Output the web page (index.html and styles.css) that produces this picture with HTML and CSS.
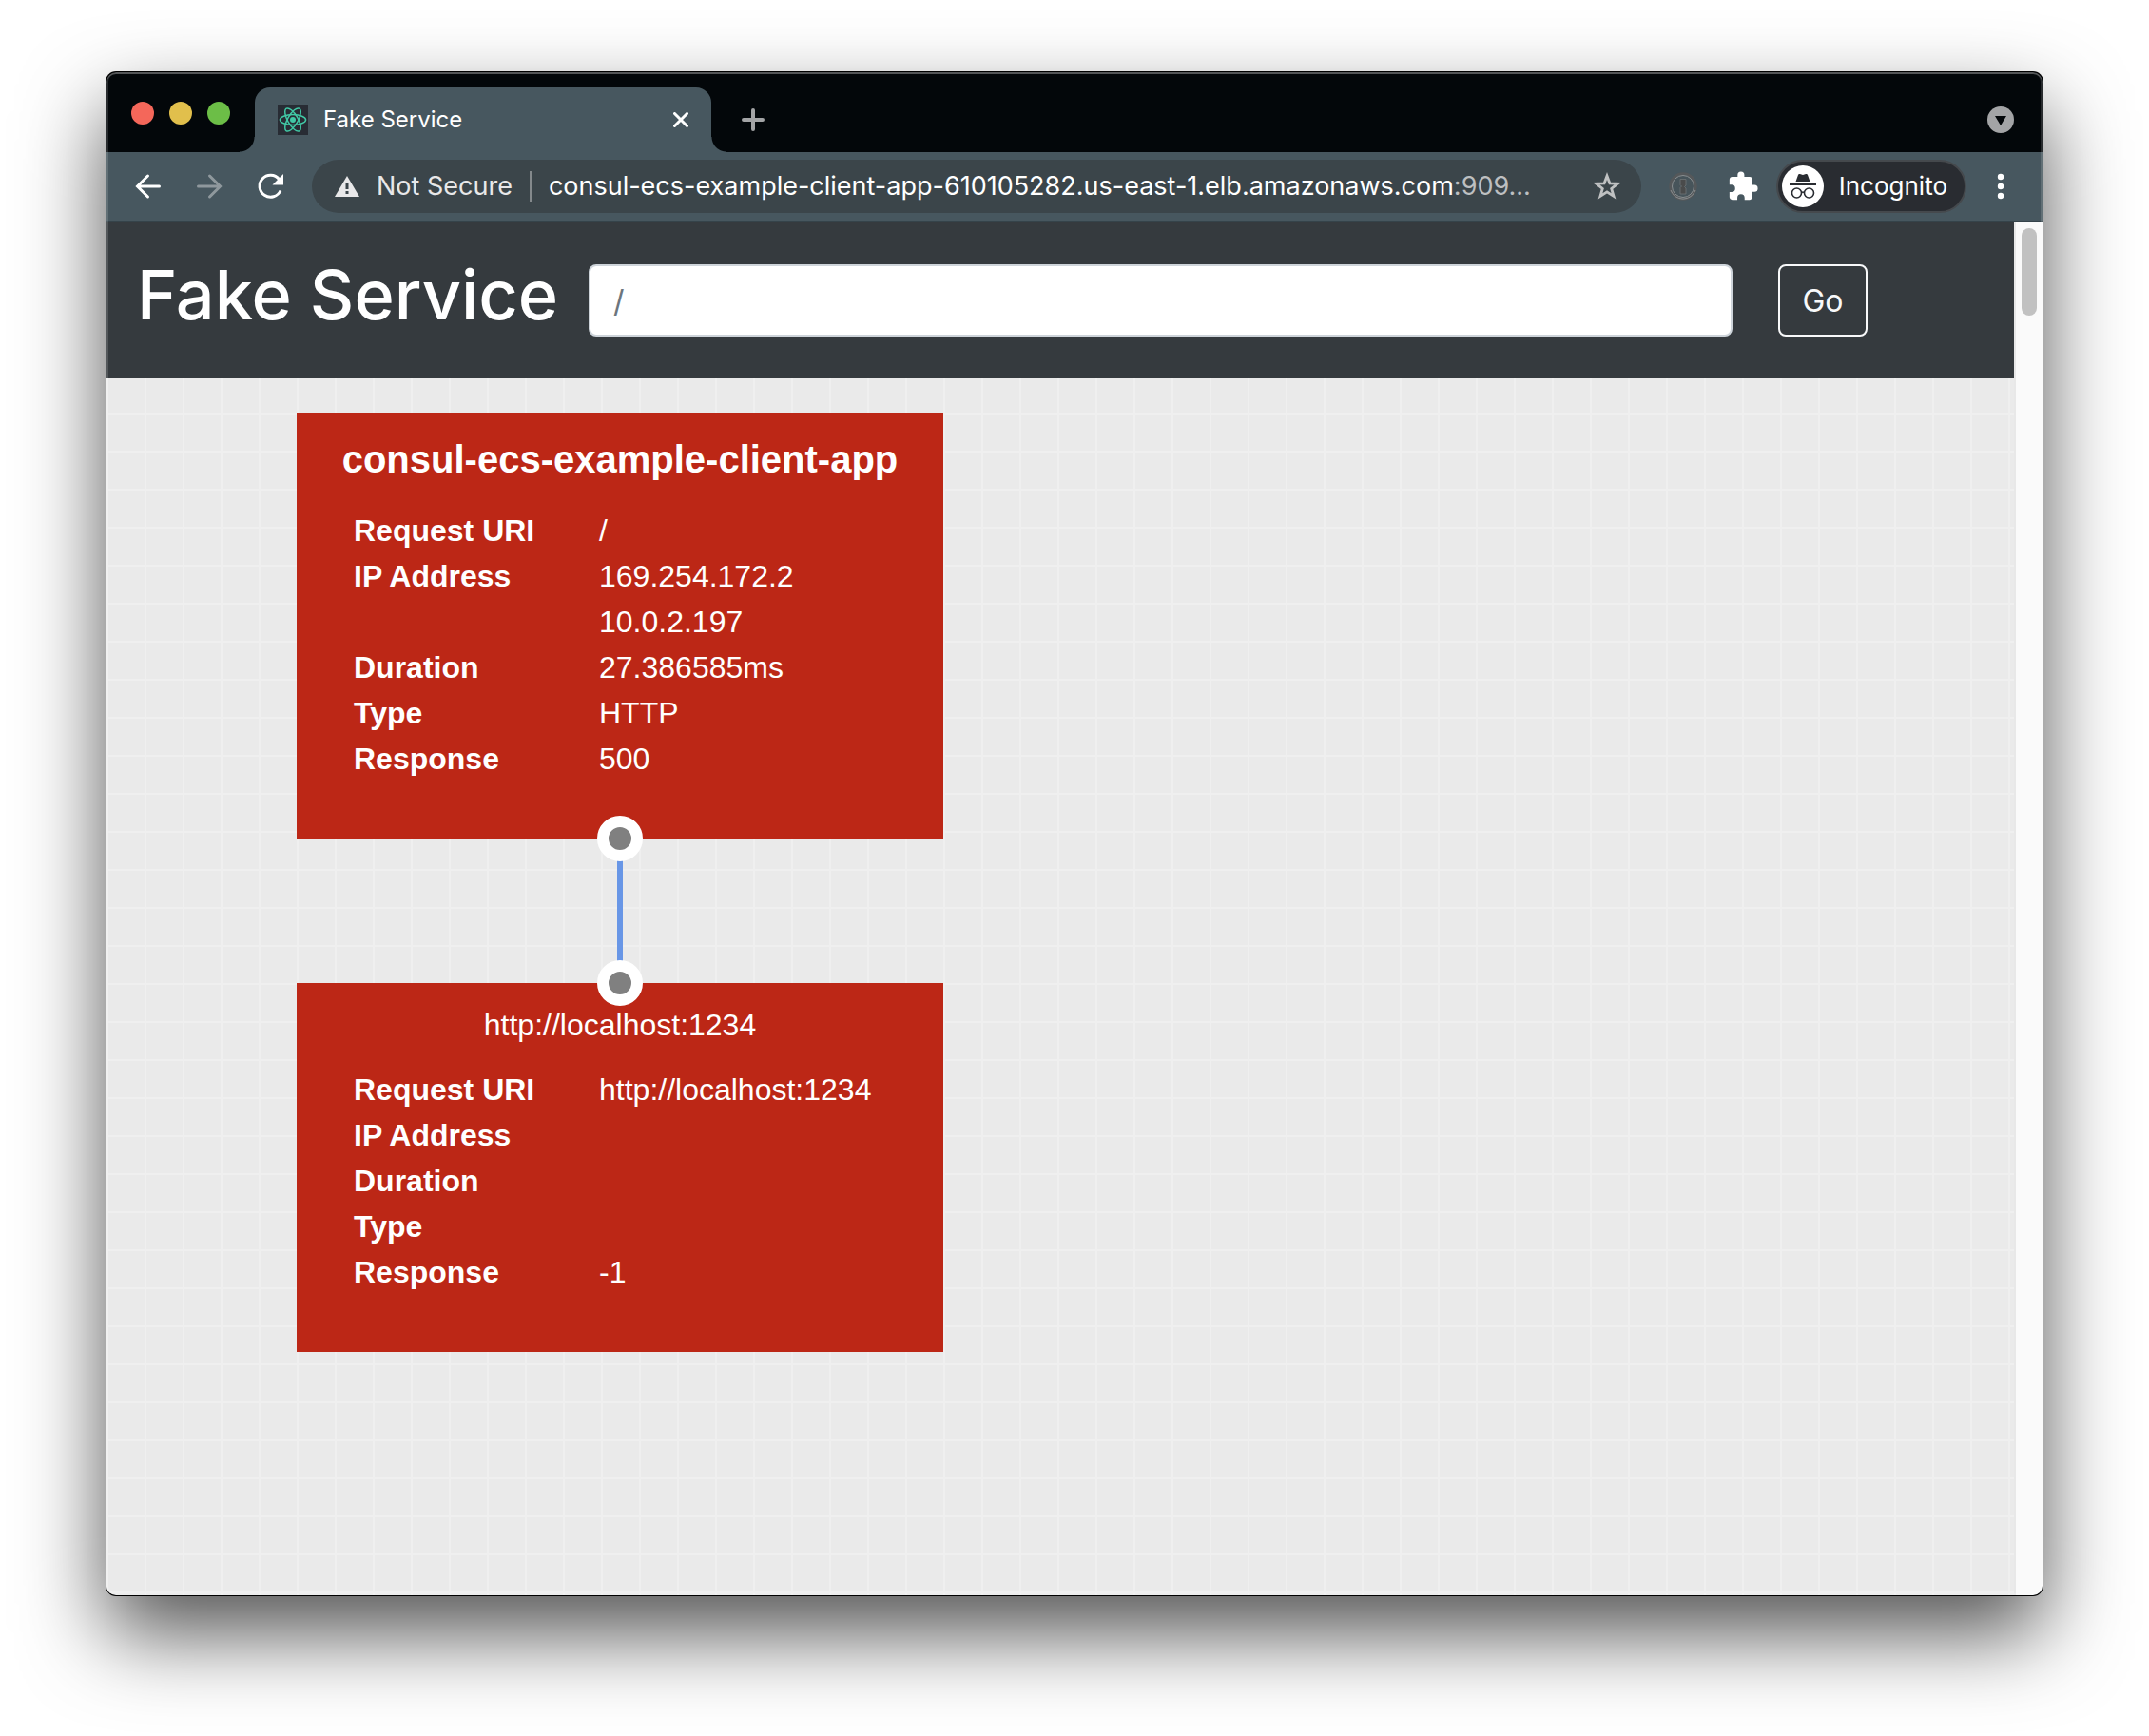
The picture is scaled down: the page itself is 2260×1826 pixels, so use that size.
FILE: index.html
```html
<!DOCTYPE html>
<html lang="en">
<head>
<meta charset="utf-8">
<title>Fake Service</title>
<link rel="stylesheet" href="styles.css">
</head>
<body>
<div class="window">
  <div class="tabstrip">
    <div class="lights">
      <span class="light light-close"></span>
      <span class="light light-min"></span>
      <span class="light light-max"></span>
    </div>
    <div class="tab">
      <svg class="favicon" viewBox="0 0 32 32" aria-hidden="true">
        <rect width="32" height="32" fill="#282c34"/>
        <circle cx="16" cy="16" r="3" fill="#41c8a5"/>
        <g fill="none" stroke="#41c8a5" stroke-width="1.5">
          <ellipse cx="16" cy="16" rx="13.600" ry="5.400"/>
          <ellipse cx="16" cy="16" rx="13.600" ry="5.400" transform="rotate(60 16 16)"/>
          <ellipse cx="16" cy="16" rx="13.600" ry="5.400" transform="rotate(120 16 16)"/>
        </g>
      </svg>
      <span class="tab-title">Fake Service</span>
      <button class="icon-btn" type="button" aria-label="Close tab">
        <svg width="16" height="16" viewBox="0 0 16 16"><path d="M1.5 1.5l13 13M14.5 1.5l-13 13" stroke="#fff" stroke-width="3" stroke-linecap="round"/></svg>
      </button>
    </div>
    <button class="icon-btn new-tab" type="button" aria-label="New tab">
      <svg width="24" height="24" viewBox="0 0 24 24"><path d="M12 2v20M2 12h20" stroke="#a3a4a6" stroke-width="4" stroke-linecap="round"/></svg>
    </button>
    <button class="icon-btn tab-search" type="button" aria-label="Search tabs">
      <svg width="28" height="28" viewBox="0 0 28 28"><circle cx="14" cy="14" r="14" fill="#a3a4a6"/><path d="M8 10h12l-6 10z" fill="#03070a"/></svg>
    </button>
  </div>

  <div class="toolbar">
    <div class="nav">
      <button class="icon-btn" type="button" aria-label="Back">
        <svg width="32" height="32" viewBox="0 0 32 32" fill="none" stroke="#fff" stroke-width="3" stroke-linecap="round"><path d="M27.500 16H5M15.500 5L4.500 16l11 11"/></svg>
      </button>
      <button class="icon-btn" type="button" aria-label="Forward">
        <svg width="32" height="32" viewBox="0 0 32 32" fill="none" stroke="#8f989d" stroke-width="3" stroke-linecap="round"><path d="M4.500 16H27M16.500 5l11 11-11 11"/></svg>
      </button>
      <button class="icon-btn" type="button" aria-label="Reload">
        <svg width="32" height="32" viewBox="0 0 32 32"><path d="M27 20.500a11.500 11.500 0 1 1-1.500-12" fill="none" stroke="#fff" stroke-width="3"/><path d="M30 3v11.500H18.500z" fill="#fff"/></svg>
      </button>
    </div>
    <div class="omnibox">
      <svg width="26" height="24" viewBox="0 0 26 24"><path d="M13 1L26 23H0z" fill="#e8e8e9"/><path d="M11.500 9h3v6h-3zM11.500 17h3v3h-3z" fill="#3b454a"/></svg>
      <span class="security">Not Secure</span>
      <span class="divider"></span>
      <span class="url">consul-ecs-example-client-app-610105282.us-east-1.elb.amazonaws.com<span class="port">:909...</span></span>
      <button class="icon-btn" type="button" aria-label="Bookmark this page">
        <svg width="32" height="32" viewBox="0 0 32 32"><path d="M16 5l2.900 7.800 8.400.4-6.600 5.200 2.300 8L16 21.900l-7 4.500 2.300-8-6.600-5.200 8.400-.4z" fill="none" stroke="#bfc1c2" stroke-width="2.800"/></svg>
      </button>
    </div>
    <div class="actions">
      <button class="icon-btn" type="button" aria-label="Password manager">
        <svg width="32" height="32" viewBox="0 0 32 32"><circle cx="16" cy="16" r="13.200" fill="#47545a" stroke="#55585a" stroke-width="3"/><circle cx="16" cy="16" r="11.500" fill="none" stroke="#8b8f91" stroke-width="1"/><path d="M3 20a13.800 13.800 0 0 0 26 0" fill="none" stroke="#8b8f91" stroke-width="1"/><path d="M13 8.500h6V15l-1.500 1.500L19 18v6h-6v-6.500l1.500-1.500L13 14.500z" fill="#4a4b4b" stroke="#6f7476" stroke-width=".8"/></svg>
      </button>
      <button class="icon-btn" type="button" aria-label="Extensions">
        <svg width="34" height="34" viewBox="0 0 24 24"><path d="M20.500 11H19V7c0-1.100-.9-2-2-2h-4V3.500a2.500 2.500 0 0 0-5 0V5H4c-1.100 0-2 .9-2 2v3.800h1.500a2.700 2.700 0 0 1 0 5.400H2V20c0 1.100.9 2 2 2h3.800v-1.500a2.700 2.700 0 0 1 5.400 0V22H17c1.100 0 2-.9 2-2v-4h1.500a2.500 2.500 0 0 0 0-5z" fill="#fff"/></svg>
      </button>
      <button class="incognito" type="button">
        <svg width="44" height="44" viewBox="0 0 44 44" aria-hidden="true"><circle cx="22" cy="22" r="22" fill="#fff"/><path d="M14.500 17l2.500-7c.3-.9 1-1.200 1.900-.9l3.100 1 3.100-1c.9-.3 1.600 0 1.900.9l2.500 7z" fill="#292c31"/><path d="M8 20h28" stroke="#292c31" stroke-width="2"/><g fill="none" stroke="#292c31" stroke-width="1.600"><circle cx="15.500" cy="29" r="5"/><circle cx="28.500" cy="29" r="5"/><path d="M20.500 28.500q1.500-1 3 0"/></g></svg>
        <span>Incognito</span>
      </button>
      <button class="icon-btn" type="button" aria-label="Menu">
        <svg width="8" height="28" viewBox="0 0 8 28" fill="#fff"><circle cx="4" cy="4" r="3.200"/><circle cx="4" cy="14" r="3.200"/><circle cx="4" cy="24" r="3.200"/></svg>
      </button>
    </div>
  </div>

  <div class="viewport">
    <div class="page">
      <header class="header">
        <h1 class="brand">Fake Service</h1>
        <form class="request-form">
          <input class="path" type="text" placeholder="/" aria-label="Request path">
          <button class="go" type="button">Go</button>
        </form>
      </header>
      <main class="canvas">
        <section class="node">
          <h2 class="node-title">consul-ecs-example-client-app</h2>
          <table class="facts">
            <tr><th scope="row">Request URI</th><td>/</td></tr>
            <tr><th scope="row">IP Address</th><td>169.254.172.2<br>10.0.2.197</td></tr>
            <tr><th scope="row">Duration</th><td>27.386585ms</td></tr>
            <tr><th scope="row">Type</th><td>HTTP</td></tr>
            <tr><th scope="row">Response</th><td>500</td></tr>
          </table>
          <span class="port-dot port-out"></span>
        </section>
        <div class="edge"></div>
        <section class="node">
          <p class="node-url">http://localhost:1234</p>
          <table class="facts">
            <tr><th scope="row">Request URI</th><td>http://localhost:1234</td></tr>
            <tr><th scope="row">IP Address</th><td></td></tr>
            <tr><th scope="row">Duration</th><td></td></tr>
            <tr><th scope="row">Type</th><td></td></tr>
            <tr><th scope="row">Response</th><td>-1</td></tr>
          </table>
          <span class="port-dot port-in"></span>
        </section>
      </main>
    </div>
    <div class="scrollbar"><div class="thumb"></div></div>
  </div>
</div>
</body>
</html>
```

FILE: styles.css
```css
* {
  box-sizing: border-box;
}

body {
  margin: 0;
  min-height: 100vh;
  padding: 76px 112px 148px;
  display: flex;
  background: #fff;
  font-family: Inter, "Liberation Sans", sans-serif;
}

button {
  font: inherit;
  cursor: pointer;
}

.window {
  flex: 1;
  min-width: 0;
  position: relative;
  display: flex;
  flex-direction: column;
  overflow: hidden;
  border-radius: 10px;
  background: #03070a;
  box-shadow: 0 0 0 1px #000, 0 40px 88px rgba(0, 0, 0, .68);
}

/* Light rim drawn over the window's contents */
.window::after {
  content: "";
  position: absolute;
  inset: 0;
  border-radius: inherit;
  pointer-events: none;
  box-shadow: inset 0 2px 0 rgba(255, 255, 255, .2), inset 0 0 0 2px rgba(255, 255, 255, .15);
}

.icon-btn {
  display: flex;
  padding: 0;
  border: 0;
  background: none;
}

/* Tab strip */
.tabstrip {
  display: flex;
  align-items: flex-end;
  height: 84px;
  padding-right: 30px;
}

.lights {
  display: flex;
  gap: 16px;
  padding: 0 26px 29px;
}

.light {
  width: 24px;
  height: 24px;
  border-radius: 50%;
}

.light-close { background: #f4675a; }
.light-min { background: #e1bf4c; }
.light-max { background: #6cbe47; }

.tab {
  position: relative;
  display: flex;
  align-items: center;
  width: 480px;
  height: 68px;
  padding: 0 24px;
  border-radius: 16px 16px 0 0;
  background: #47575f;
  color: #fff;
}

/* Outward curves at the foot of the active tab */
.tab::before,
.tab::after {
  content: "";
  position: absolute;
  bottom: 0;
  width: 16px;
  height: 16px;
}

.tab::before {
  right: 100%;
  background: radial-gradient(circle at 0 0, transparent 15px, #47575f 16px);
}

.tab::after {
  left: 100%;
  background: radial-gradient(circle at 100% 0, transparent 15px, #47575f 16px);
}

.favicon {
  width: 32px;
  height: 32px;
}

.tab-title {
  flex: 1;
  padding-left: 16px;
  font-size: 24px;
  line-height: 32px;
}

.new-tab {
  margin: 0 auto 22px 32px;
}

.tab-search {
  margin-bottom: 20px;
}

/* Toolbar */
.toolbar {
  display: flex;
  align-items: center;
  height: 74px;
  padding: 0 40px 0 28px;
  border-bottom: 2px solid #35434a;
  background: #47575f;
  color: #fff;
  font-size: 27px;
  line-height: 32px;
}

.nav {
  display: flex;
  gap: 32px;
}

.omnibox {
  flex: 1;
  min-width: 0;
  display: flex;
  align-items: center;
  height: 56px;
  margin-left: 28px;
  padding: 0 20px 0 24px;
  border-radius: 28px;
  background: #3b454a;
}

.security {
  padding-left: 18px;
  color: #e8e8e9;
  white-space: nowrap;
}

.divider {
  width: 2px;
  height: 32px;
  margin: 0 18px;
  background: #84898c;
}

.url {
  flex: 1;
  min-width: 0;
  overflow: hidden;
  white-space: nowrap;
}

.port {
  color: #bdbfc1;
}

.actions {
  display: flex;
  align-items: center;
  gap: 30px;
  padding-left: 28px;
}

.incognito {
  display: flex;
  align-items: center;
  gap: 16px;
  height: 56px;
  margin: 0 2px 0 -12px;
  padding: 0 18px 0 4px;
  border: 2px solid #45494d;
  border-radius: 28px;
  background: #292c31;
  color: #fff;
  font-size: 26px;
}

/* Page */
.viewport {
  flex: 1;
  display: flex;
}

.page {
  flex: 1;
  min-width: 0;
  display: flex;
  flex-direction: column;
}

.header {
  display: flex;
  align-items: center;
  gap: 32px;
  height: 164px;
  padding: 0 154px 0 32px;
  background: #353a3e;
  color: #fff;
}

.brand {
  margin: 0;
  padding-bottom: 12px;
  font-size: 72px;
  line-height: 96px;
  font-weight: 500;
  white-space: nowrap;
}

.request-form {
  flex: 1;
  display: flex;
  gap: 48px;
}

.path {
  flex: 1;
  min-width: 0;
  height: 76px;
  padding: 0 24px;
  border: 2px solid #ced4da;
  border-radius: 8px;
  background: #fff;
  font: 32px/48px Inter, sans-serif;
}

.path::placeholder {
  color: #6c757d;
}

.go {
  height: 76px;
  width: 94px;
  padding: 0;
  border: 2px solid #f8f9fa;
  border-radius: 8px;
  background: none;
  color: #f8f9fa;
  font-size: 32px;
}

.canvas {
  flex: 1;
  padding: 36px 200px;
  background-color: #eaeaea;
  background-image:
    linear-gradient(#efefef 2px, transparent 2px),
    linear-gradient(90deg, #efefef 2px, transparent 2px);
  background-size: 40px 40px;
  background-position: 0 -4px;
  color: #fff;
  font-family: "Liberation Sans", Arial, sans-serif;
  font-size: 32px;
  line-height: 48px;
}

.node {
  position: relative;
  width: 680px;
  padding: 20px 60px 60px;
  background: #bc2716;
}

.node-title {
  margin: 0 -20px 22px;
  font-size: 40px;
  line-height: 58px;
  text-align: center;
}

.node-url {
  margin: 0 0 20px;
  text-align: center;
}

.facts {
  width: 100%;
  border-collapse: collapse;
  table-layout: fixed;
}

.facts th,
.facts td {
  height: 48px;
  padding: 0;
  text-align: left;
  vertical-align: top;
}

.facts th {
  width: 258px;
}

.edge {
  width: 6px;
  height: 152px;
  margin-left: 337px;
  background: #6896e6;
}

.port-dot {
  position: absolute;
  z-index: 1;
  left: calc(50% - 24px);
  width: 48px;
  height: 48px;
  border: 12px solid #fff;
  border-radius: 50%;
  background: #808080;
}

.port-out { bottom: -24px; }
.port-in { top: -24px; }

.scrollbar {
  width: 30px;
  padding: 6px;
  border-left: 2px solid #e8e8e8;
  background: #fafafa;
}

.thumb {
  width: 16px;
  height: 92px;
  border-radius: 8px;
  background: #c1c1c1;
}
```
